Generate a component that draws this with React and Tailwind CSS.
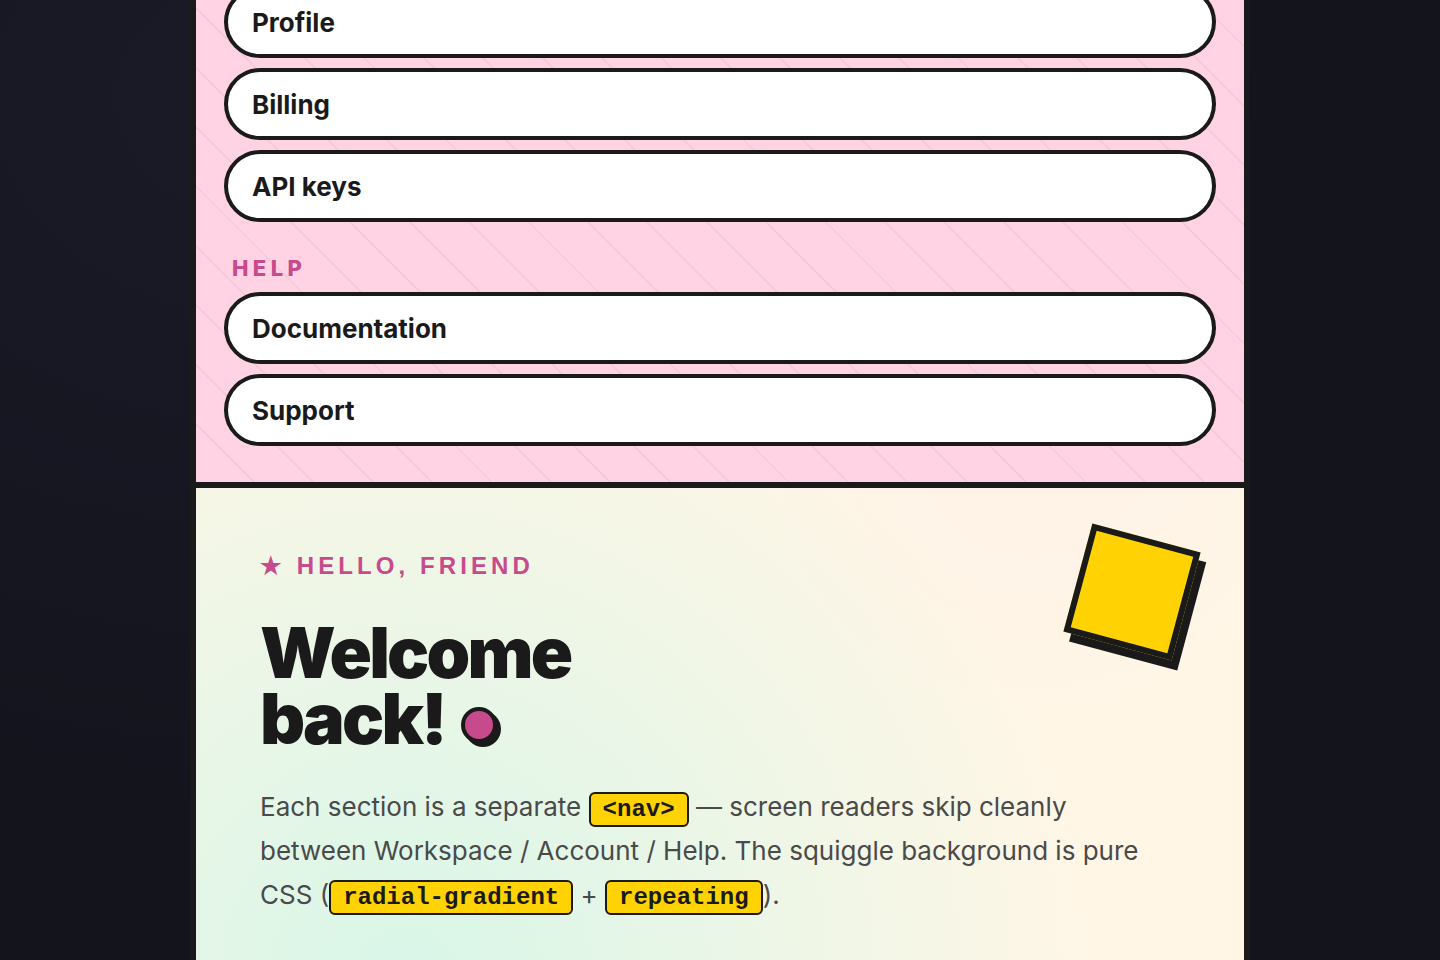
const navSections = [
  { title: null, label: 'Account', links: ['Profile', 'Billing', 'API keys'] },
  { title: 'Help', label: 'Help', links: ['Documentation', 'Support'] },
];

function NavSection({ title, label, links }) {
  return (
    <nav aria-label={label}>
      {title && (
        <h2 className="px-2 pb-2 text-[22px] leading-8 font-extrabold uppercase tracking-[0.2em] text-[#c74b8c]">
          {title}
        </h2>
      )}
      <ul className="flex flex-col gap-2.5">
        {links.map((link) => (
          <li key={link}>
            <a
              href="#"
              className="block rounded-full border-4 border-[#1a1a1a] bg-white px-6 pt-[17px] pb-[15px] text-[26px] leading-8 font-bold"
            >
              {link}
            </a>
          </li>
        ))}
      </ul>
    </nav>
  );
}

function Code({ children }) {
  return (
    <code className="rounded-md border-2 border-[#1a1a1a] bg-[#ffd303] px-3 py-0.5 font-['Courier_New','Liberation_Mono',monospace] text-2xl font-bold text-[#1a1a1a]">
      {children}
    </code>
  );
}

export default function App() {
  return (
    <div className="min-h-screen bg-[#14141d] bg-[radial-gradient(ellipse_at_20%_10%,#1a1a28_0%,#14141d_60%)] font-['Inter',sans-serif] text-[#1a1a1a]">
      <div className="mx-auto flex min-h-screen max-w-[1060px] flex-col overflow-hidden border-x-[6px] border-[#1a1a1a]">
        <aside className="border-b-[6px] border-[#1a1a1a] bg-[#ffd3e4] bg-[repeating-linear-gradient(45deg,transparent_0px,transparent_40px,rgba(0,0,0,0.04)_40px,rgba(0,0,0,0.04)_42px)] px-7 pb-9">
          <div className="-mt-3.5 flex flex-col gap-[30px]">
            {navSections.map((section) => (
              <NavSection key={section.label} {...section} />
            ))}
          </div>
        </aside>

        <main className="relative flex-1 bg-[#fff6e6] bg-[radial-gradient(circle_680px_at_20%_104%,#d8f6e8_0%,transparent_100%),radial-gradient(circle_at_80%_-10%,#fff2e8_0%,transparent_28%)] px-16 pt-16 pb-9">
          <div
            aria-hidden="true"
            className="absolute top-12 right-14 size-28 rotate-15 border-[6px] border-[#1a1a1a] bg-[#ffd303] shadow-[8px_8px_0_#1a1a1a]"
          />
          <p className="font-['Liberation_Sans',sans-serif] text-2xl leading-7 font-bold uppercase tracking-[0.17em] text-[#c74b8c]">
            ★ Hello, friend
          </p>
          <h1 className="mt-10 text-[70px] leading-[66px] font-black tracking-[-0.04em]">
            Welcome
            <br />
            back!
            <span
              aria-hidden="true"
              className="ml-4 inline-block size-9 rounded-full border-4 border-[#1a1a1a] bg-[#c74b8c] align-middle shadow-[4px_4px_0_#1a1a1a]"
            />
          </h1>
          <p className="mt-[33px] text-[26px] leading-[44px] text-[#4a4a4a]">
            Each section is a separate <Code>&lt;nav&gt;</Code> — screen readers skip cleanly between
            Workspace / Account / Help. The squiggle background is pure CSS (
            <Code>radial-gradient</Code> + <Code>repeating</Code>).
          </p>
        </main>
      </div>
    </div>
  );
}
